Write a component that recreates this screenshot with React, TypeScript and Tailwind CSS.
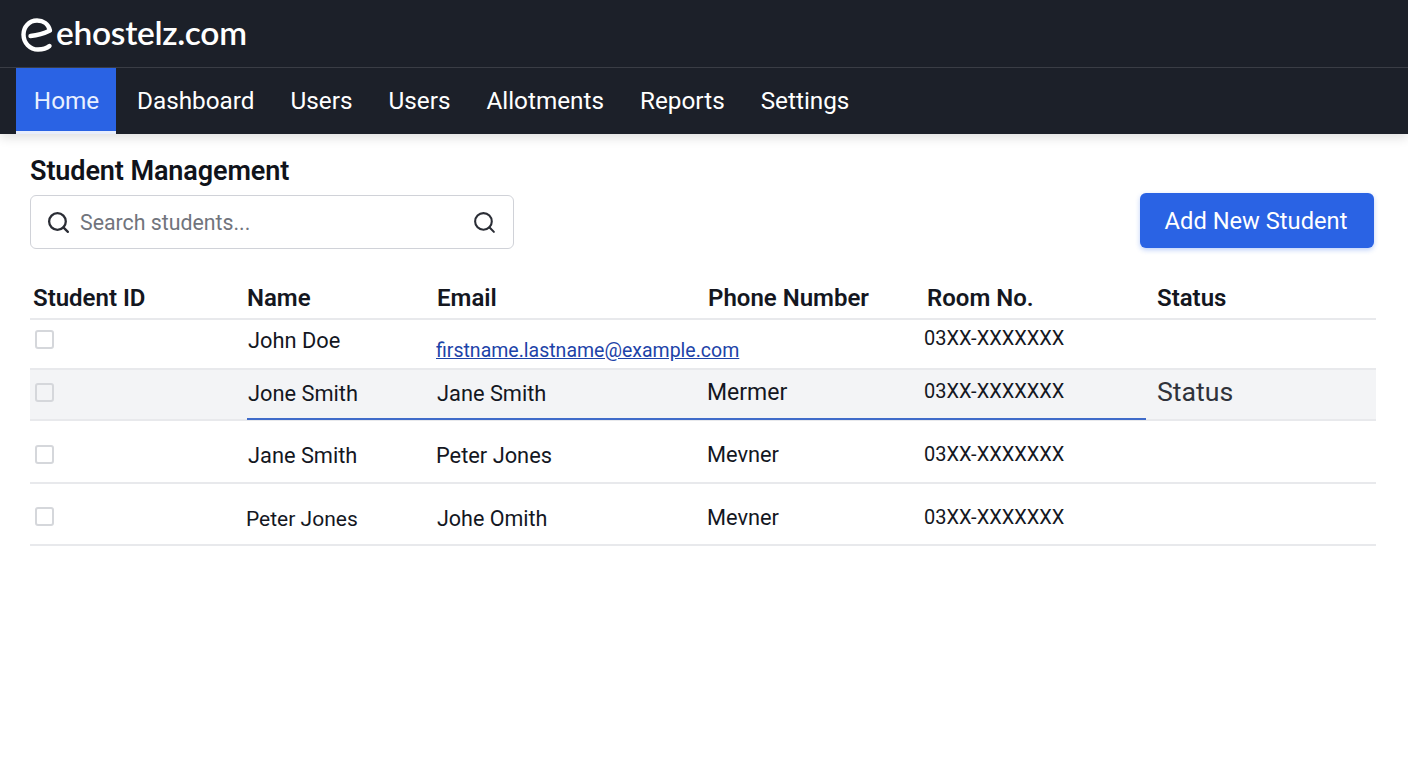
import { Search } from "lucide-react";

const nav = ["Dashboard", "Users", "Users", "Allotments", "Reports", "Settings"];
const cols = "grid grid-cols-[217px_190px_270px_217px_233px_1fr]";

function Box({ className = "" }: { className?: string }) {
  return <span className={`block h-[19px] w-[19px] rounded-[3px] border-2 border-[#d5d7db] bg-white ${className}`} />;
}

export default function App() {
  return (
    <div className="min-h-[768px] bg-white font-['Roboto',sans-serif] text-[#14171f]">
      <header className="bg-[#1c2029] shadow-[0_4px_10px_rgba(0,0,0,0.12)]">
        <div className="flex h-[68px] items-center border-b border-[#3a3d45] pb-[2px] pl-[21px]">
          <svg width="32" height="34" viewBox="0 0 32 34" fill="none" className="mt-[4px]" aria-hidden="true">
            <path d="M9.5 18 C15 17.5 23 15.5 29 12.5 C27.5 6 22 2.5 16 2.5 C8 2.5 2.5 9 2.5 16.5 C2.5 25 9 31.5 17 31.5 C21 31.5 25 31 28.5 28" stroke="white" strokeWidth="4.4" strokeLinecap="round" strokeLinejoin="round" />
          </svg>
          <span className="ml-[3px] font-['Lato',sans-serif] text-[33.5px] leading-none font-semibold tracking-[-0.3px] text-white">ehostelz.com</span>
        </div>
        <nav className="flex h-[66px] pl-[16px] text-[24.3px] text-white">
          <a className="flex w-[100px] items-center justify-center border-b-[3px] border-[#e8eefc] bg-[#2a63e4] pt-[3px] pl-[1px] text-[#e8f0ff]">Home</a>
          <div className="ml-[21px] flex items-center gap-[36px]">
            {nav.map((n, i) => (
              <a key={i} className="leading-none">{n}</a>
            ))}
          </div>
        </nav>
      </header>

      <main className="pr-[32px] pl-[30px]">
        <h1 className="pt-[22px] text-[27px] leading-[30px] font-semibold tracking-[-0.1px] text-[#10131a]">Student Management</h1>
        <div className="mt-[8px] flex items-start justify-between pr-[2px]">
          <div className="mt-[1px] flex h-[54px] w-[484px] items-center rounded-[6px] border-[1.5px] border-[#d0d2d8] bg-white pr-[16px] pl-[15px]">
            <Search size={25} strokeWidth={2.2} className="text-[#2a2d35]" />
            <span className="ml-[9px] flex-1 pt-[1px] text-[21.3px] text-[#71747c]">Search students...</span>
            <Search size={25} strokeWidth={2} className="text-[#2a2d35]" />
          </div>
          <button className="h-[55px] w-[234px] -translate-y-[1px] rounded-[6px] bg-[#2a63e4] pt-[2px] pr-[2px] text-[23.7px] text-white shadow-[0_2px_5px_rgba(37,99,235,0.3)]">Add New Student</button>
        </div>

        <div className="mt-[35px] text-[21.8px]">
          <div className={`${cols} h-[36px] border-b-2 border-[#e8e9ec] pt-[1px] text-[24px] leading-[26px] font-semibold`}>
            <span className="pl-[3px]">Student ID</span>
            <span>Name</span>
            <span>Email</span>
            <span className="pl-[1px]">Phone Number</span>
            <span className="pl-[3px]">Room No.</span>
            <span>Status</span>
          </div>

          <div className={`${cols} h-[48px] items-start`}>
            <span className="pt-[10px] pl-[5px]"><Box /></span>
            <span className="pt-[7px] pl-[1px] leading-[28px]">John Doe</span>
            <a className="-ml-[1px] pt-[18px] text-[19.5px] leading-[26px] whitespace-nowrap text-[#1d43a8] underline">firstname.lastname@example.com</a>
            <span />
            <span className="pt-[5px] text-[20px] leading-[26px] whitespace-nowrap">03XX-XXXXXXX</span>
            <span />
          </div>

          <div className="relative border-y-2 border-[#e8e9ec] bg-[#f3f4f6]">
            <div className={`${cols} h-[49px] items-start`}>
              <span className="pt-[13px] pl-[5px]"><Box className="!bg-[#f3f4f6]" /></span>
              <span className="pt-[10px] pl-[1px] leading-[28px]">Jone Smith</span>
              <span className="pt-[10px] leading-[28px]">Jane Smith</span>
              <span className="pt-[9px] text-[23px] leading-[28px]">Mermer</span>
              <span className="pt-[8px] text-[20px] leading-[26px] whitespace-nowrap">03XX-XXXXXXX</span>
              <span className="pt-[7px] text-[26.7px] leading-[30px] text-[#30333b]">Status</span>
            </div>
            <span className="absolute -bottom-[1px] left-[217px] h-[2px] w-[899px] bg-[#3f6bc9]" />
          </div>

          <div className={`${cols} h-[63px] items-start border-b-2 border-[#e8e9ec]`}>
            <span className="pt-[24px] pl-[5px]"><Box /></span>
            <span className="pt-[21px] pl-[1px] leading-[28px]">Jane Smith</span>
            <span className="-ml-[1px] pt-[21px] leading-[28px]">Peter Jones</span>
            <span className="pt-[20px] leading-[28px]">Mevner</span>
            <span className="pt-[20px] text-[20px] leading-[26px] whitespace-nowrap">03XX-XXXXXXX</span>
            <span />
          </div>

          <div className={`${cols} h-[62px] items-start border-b-2 border-[#e8e9ec]`}>
            <span className="pt-[23px] pl-[5px]"><Box /></span>
            <span className="-ml-[1px] pt-[21px] text-[21px] leading-[28px]">Peter Jones</span>
            <span className="pt-[21px] text-[21.5px] leading-[28px]">Johe Omith</span>
            <span className="pt-[20px] leading-[28px]">Mevner</span>
            <span className="pt-[20px] text-[20px] leading-[26px] whitespace-nowrap">03XX-XXXXXXX</span>
            <span />
          </div>
        </div>
      </main>
    </div>
  );
}
